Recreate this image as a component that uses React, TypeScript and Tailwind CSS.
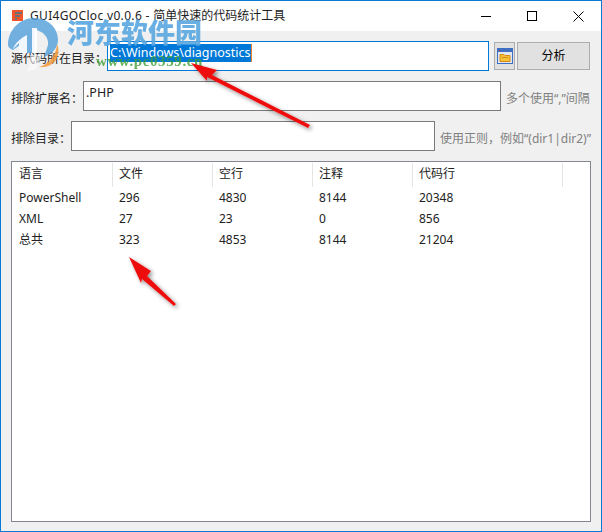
const font = "font-['Noto_Sans','Noto_Sans_CJK_SC',sans-serif]"

const columns = [
  { title: '语言', cell: 'w-[101px] pl-[7px]' },
  { title: '文件', cell: 'w-[100px] pl-[6px]' },
  { title: '空行', cell: 'w-[100px] pl-[6px]' },
  { title: '注释', cell: 'w-[100px] pl-[6px]' },
  { title: '代码行', cell: 'w-[150px] pl-[6px]' },
]

const rows = [
  ['PowerShell', '296', '4830', '8144', '20348'],
  ['XML', '27', '23', '0', '856'],
  ['总共', '323', '4853', '8144', '21204'],
]

function TitleBar() {
  return (
    <div className="flex h-[30px] shrink-0 items-center bg-white pl-[10px]">
      <svg width="14" height="14" viewBox="0 0 14 14" className="shrink-0">
        <rect x="1" y="1" width="11" height="11" fill="#f0562a" />
        <rect x="4" y="3" width="7" height="2" fill="#6b6f78" />
        <rect x="4" y="6" width="5" height="2" fill="#6b6f78" />
        <rect x="4" y="9" width="2" height="2" fill="#6b6f78" />
      </svg>
      <span className="ml-[5px] whitespace-nowrap text-[12px] text-[#222]">
        <span className="tracking-[0.33px]">GUI4GOCloc v0.0.6 - </span>简单快速的代码统计工具
      </span>
      <div className="ml-auto flex h-full">
        <div className="flex w-[46px] items-center justify-center">
          <div className="h-px w-[10px] bg-black" />
        </div>
        <div className="flex w-[46px] items-center justify-center">
          <div className="size-[10px] border border-black" />
        </div>
        <div className="flex w-[46px] items-center justify-center">
          <svg width="11" height="11" viewBox="0 0 11 11">
            <path d="M0.5 0.5 10.5 10.5M10.5 0.5 0.5 10.5" stroke="#000" fill="none" />
          </svg>
        </div>
      </div>
    </div>
  )
}

function FolderIcon() {
  return (
    <svg width="16" height="16" viewBox="0 0 16 16">
      <rect x="0.5" y="0.5" width="15" height="15" fill="#dfe7f5" stroke="#3f6fc0" />
      <rect x="1" y="1" width="14" height="3" fill="#3f6fc0" />
      <rect x="2" y="2" width="1" height="1" fill="#d03030" />
      <path d="M3 6.5h4l1 1h5v6H3z" fill="#f5c33b" stroke="#d8890f" />
      <rect x="5" y="9" width="6" height="1" fill="#d8890f" />
    </svg>
  )
}

function Overlays() {
  return (
    <>
      {/* watermark */}
      <svg className="absolute left-0 top-0" width="70" height="72" viewBox="0 0 70 72">
        <path d="M7 44C7 28 20 17 33 17c14 0 24 10 24 22 0 8-6 14-14 17l4-12c1-8-5-14-13-15l-1 23H19v-8l-7 5c-3-1-5-3-5-5z" fill="#5aa3dc" fillOpacity="0.85" />
        <path d="M12 48c2-6 8-11 14-14v18H18V42z" fill="#fff" fillOpacity="0.9" />
        <path d="M31 27h5v25h-5z" fill="#fff" fillOpacity="0.9" />
        <path d="M38 66c10-3 17-11 18-23 2 4 2 10 0 14-3 6-9 10-18 9z" fill="#f29a3a" fillOpacity="0.85" />
        <path d="M29 54h12l-6 14-9 3 3-8z" fill="#fff" fillOpacity="0.55" />
      </svg>
      <div className="absolute left-[66px] top-[13px] whitespace-nowrap text-[27px] font-black leading-[36px] text-[#5aa7e0] opacity-90 font-['Noto_Sans_CJK_SC',sans-serif]">
        河东软件园
      </div>
      <div className="absolute left-[95px] top-[51px] whitespace-nowrap text-[15px] font-bold leading-[18px] tracking-[0.6px] text-[#3e9e36] opacity-80 font-['Liberation_Serif',serif]">
        www.pc0359.cn
      </div>
      {/* arrows */}
      <svg className="absolute left-0 top-0" width="602" height="532" viewBox="0 0 602 532">
        <defs>
          <filter id="arrowShadow" x="-30%" y="-30%" width="160%" height="160%">
            <feDropShadow dx="2" dy="2" stdDeviation="2" floodColor="#000" floodOpacity="0.45" />
          </filter>
        </defs>
        <g fill="#ee1111" filter="url(#arrowShadow)">
          <path d="M190 62 216 69 211 74 309 124 307 127 206 76 206 80z" />
          <path d="M128 256 150 270 146 275 175 303 173 305 141 278 140 282z" />
        </g>
      </svg>
    </>
  )
}

export default function App() {
  return (
    <div className={`relative flex h-[532px] w-[602px] flex-col overflow-hidden border border-[#0a7ad6] bg-[#f0f0f0] ${font}`}>
      <TitleBar />
      <div className="flex flex-1 flex-col px-[10px] pb-[9px] pt-[10px] text-[12px] text-[#222]">
        <div className="flex h-[30px] items-center">
          <label className="w-[96px] shrink-0 whitespace-nowrap pt-[5px]">源代码所在目录：</label>
          <div className="h-[30px] w-[382px] border border-[#0078d7] bg-white pl-[2px] pt-[2px] text-[12.5px]">
            <span className="block w-fit border-r border-[#e8832a] bg-[#0078d7] leading-[18px] text-white">C:\Windows\diagnostics</span>
          </div>
          <button className="ml-[5px] flex h-[28px] w-[21px] items-center justify-center border border-[#adadad] bg-[#e1e1e1]">
            <FolderIcon />
          </button>
          <button className="ml-[2px] h-[28px] w-[73px] border border-[#adadad] bg-[#e1e1e1] text-[12px] text-black">分析</button>
        </div>
        <div className="mt-[10px] flex h-[30px] items-center">
          <label className="w-[72px] shrink-0 whitespace-nowrap pt-[5px]">排除扩展名：</label>
          <div className="h-[30px] w-[418px] border border-[#7a7a7a] bg-white pl-[2px] pt-[2px] text-[12.5px] leading-[18px]">.PHP</div>
          <span className="ml-[5px] whitespace-nowrap pt-[5px] text-[#808080]">多个使用“,”间隔</span>
        </div>
        <div className="mt-[10px] flex h-[30px] items-center">
          <label className="w-[60px] shrink-0 whitespace-nowrap pt-[5px]">排除目录：</label>
          <div className="h-[30px] w-[364px] border border-[#7a7a7a] bg-white" />
          <span className="ml-[5px] whitespace-nowrap pt-[5px] text-[#808080]">使用正则，例如“(dir1|dir2)”</span>
        </div>
        <div className="mt-[10px] flex-1 border border-[#828790] bg-white">
          <div className="mt-px flex h-[24px]">
            {columns.map((c) => (
              <div key={c.title} className={`${c.cell} border-r border-[#e5e5e5] leading-[22px]`}>
                {c.title}
              </div>
            ))}
          </div>
          <div>
            {rows.map((r) => (
              <div key={r[0]} className="flex h-[21px] items-center">
                {r.map((cell, i) => (
                  <div key={i} className={columns[i].cell}>
                    {cell}
                  </div>
                ))}
              </div>
            ))}
          </div>
        </div>
      </div>
      <Overlays />
    </div>
  )
}
